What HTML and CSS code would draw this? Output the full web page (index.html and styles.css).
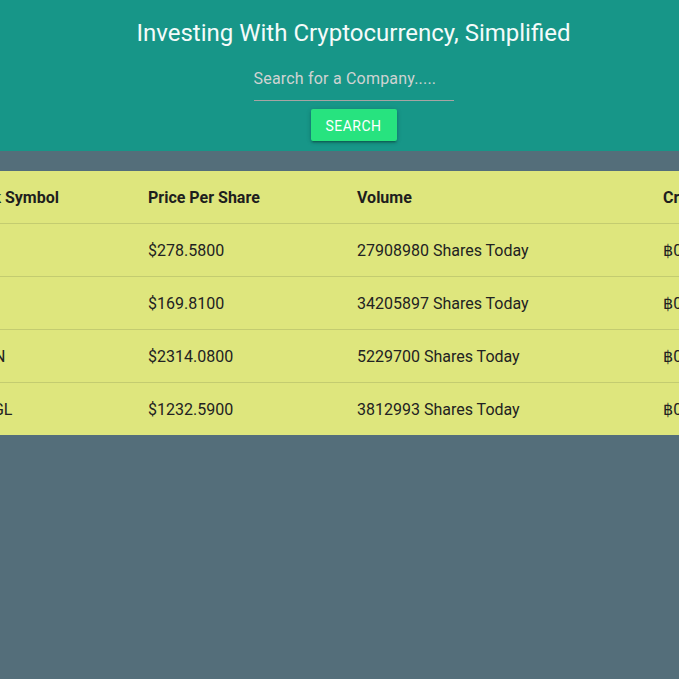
FILE: index.html
```html
<!DOCTYPE html>
<html lang="en">
<head>
<meta charset="utf-8">
<title>Investing With Cryptocurrency, Simplified</title>
<link rel="stylesheet" href="styles.css">
</head>
<body>
<header class="hero">
  <h1 class="hero-title">Investing With Cryptocurrency, Simplified</h1>
  <input class="search-input" type="text" placeholder="Search for a Company.....">
  <button class="search-btn" type="button">Search</button>
</header>
<main class="table-wrap">
  <table class="stocks">
    <colgroup>
      <col class="c-sym"><col class="c-price"><col class="c-vol"><col class="c-crypto">
    </colgroup>
    <thead>
      <tr><th>Stock Symbol</th><th>Price Per Share</th><th>Volume</th><th>Crypto Price</th></tr>
    </thead>
    <tbody>
      <tr><td>AAPL</td><td>$278.5800</td><td>27908980 Shares Today</td><td>฿0.0401</td></tr>
      <tr><td>FB</td><td>$169.8100</td><td>34205897 Shares Today</td><td>฿0.0244</td></tr>
      <tr><td>AMZN</td><td>$2314.0800</td><td>5229700 Shares Today</td><td>฿0.3331</td></tr>
      <tr><td>GOOGL</td><td>$1232.5900</td><td>3812993 Shares Today</td><td>฿0.1774</td></tr>
    </tbody>
  </table>
</main>
</body>
</html>
```

FILE: styles.css
```css
html, body {
  margin: 0;
  padding: 0;
}
body {
  background: #546e7a;
  font-family: Roboto, "Noto Sans", "DejaVu Sans", sans-serif;
  color: #222;
  min-height: 679px;
  overflow-x: hidden;
}
.hero {
  background: #179688;
  display: flex;
  flex-direction: column;
  align-items: center;
  padding: 18px 0 10px 28px;
}
.hero-title {
  margin: 0;
  font-size: 24px;
  line-height: 30px;
  font-weight: 400;
  color: #f4fbfa;
}
.search-input {
  margin-top: 5px;
  width: 200px;
  height: 44px;
  box-sizing: content-box;
  padding: 3px 0 0;
  border: none;
  border-bottom: 1px solid #a8a4a4;
  background: transparent;
  font-family: inherit;
  font-size: 16px;
  letter-spacing: 0.2px;
  color: #fff;
  outline: none;
}
.search-input::placeholder {
  color: #cfd3d2;
}
.search-btn {
  margin-top: 8px;
  width: 86px;
  height: 32px;
  border: none;
  border-radius: 2px;
  background: #27e37f;
  color: #fff;
  font-family: inherit;
  font-size: 14px;
  letter-spacing: 0.5px;
  text-transform: uppercase;
  box-shadow: 0 2px 2px 0 rgba(0,0,0,0.14), 0 3px 1px -2px rgba(0,0,0,0.12), 0 1px 5px 0 rgba(0,0,0,0.2);
  padding: 1px 0 0;
}
.table-wrap {
  display: flex;
  justify-content: center;
  margin-top: 20px;
  overflow: hidden;
}
.stocks {
  flex: none;
  width: 791px;
  table-layout: fixed;
  border-collapse: collapse;
  background: #dee67d;
  font-size: 16px;
}
.c-sym { width: 188px; }
.c-price { width: 209px; }
.c-vol { width: 306px; }
.c-crypto { width: 88px; }
.stocks th, .stocks td {
  text-align: left;
  padding: 16px 16px 14px;
  line-height: 22px;
  white-space: nowrap;
  overflow: hidden;
}
.stocks th {
  font-weight: 700;
  color: #1e1e1e;
}
.stocks tr {
  border-bottom: 1px solid #c3cc70;
}
.stocks tbody tr:last-child {
  border-bottom: none;
}
```
